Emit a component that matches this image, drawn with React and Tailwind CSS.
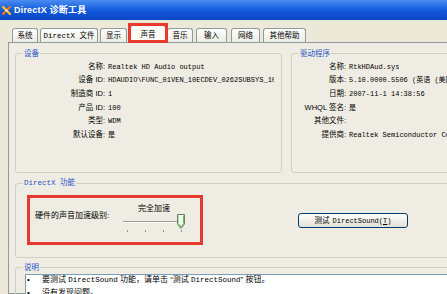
import React from "react";

const tabs = [
  { t: "系统", cls: "w-[26px] ml-[12px]" },
  { t: "DirectX 文件", cls: "w-[58px] ml-[2px]" },
  { t: "显示", cls: "w-[27px] ml-[2px]" },
  { t: "声音", cls: "w-[36px] ml-[3px]", sel: true },
  { t: "音乐", cls: "w-[26px] ml-[1px]" },
  { t: "输入", cls: "w-[31px] ml-[3px]" },
  { t: "网络", cls: "w-[29px] ml-[4px]" },
  { t: "其他帮助", cls: "w-[43px] ml-[3px]" },
];

const deviceRows = [
  ["名称:", "Realtek HD Audio output"],
  ["设备 ID:", "HDAUDIO\\FUNC_01VEN_10ECDEV_0262SUBSYS_10EC0888"],
  ["制造商 ID:", "1"],
  ["产品 ID:", "100"],
  ["类型:", "WDM"],
  ["默认设备:", "是"],
];

const driverRows = [
  ["名称:", "RtkHDAud.sys"],
  ["版本:", "5.10.0000.5506 (英语 (美国))"],
  ["日期:", "2007-11-1 14:38:56"],
  ["WHQL 签名:", "是"],
  ["其他文件:", ""],
  ["提供商:", "Realtek Semiconductor Corp."],
];

function GroupLabel({ children }) {
  return (
    <span className="absolute -top-[6px] left-[7px] px-[1px] bg-[#efede3] text-[#1d52c9] text-[7.5px] leading-[11px] whitespace-nowrap">
      {children}
    </span>
  );
}

function InfoRow({ label, value, labelW }) {
  return (
    <div className="flex items-center h-[13.6px] whitespace-nowrap">
      <span className={`${labelW} shrink-0 text-right text-[7.5px] leading-[10px]`}>{label}</span>
      <span className="ml-[3px] text-[7px] leading-[10px] font-['Liberation_Mono','Noto_Sans_CJK_SC',monospace] overflow-hidden">
        {value}
      </span>
    </div>
  );
}

function DxIcon() {
  return (
    <svg width="9" height="9" viewBox="0 0 9 9">
      <path d="M1 1 L8 8" stroke="#f7c21a" strokeWidth="2.4" strokeLinecap="round" />
      <path d="M8 1 L1 8" stroke="#e8731a" strokeWidth="2.4" strokeLinecap="round" />
      <circle cx="4.5" cy="4.5" r="1.3" fill="#fff6c0" />
    </svg>
  );
}

function Thumb() {
  return (
    <svg width="8" height="15" viewBox="0 0 8 15">
      <path d="M0.5 0.5 H7.5 V10 L4 14.5 L0.5 10 Z" fill="#f6f6f0" stroke="#6f7f6a" strokeWidth="1" />
      <path d="M1.5 9.8 L4 13 L6.5 9.8" fill="none" stroke="#3fbf3f" strokeWidth="1" />
      <path d="M6.5 1.5 V9.5" stroke="#4fc44f" strokeWidth="1" />
      <path d="M1.5 1.5 V9.5" stroke="#9fe09f" strokeWidth="1" />
    </svg>
  );
}

export default function App() {
  return (
    <div className="relative w-[447px] h-[294px] overflow-hidden bg-[#ece9d8] text-black font-['Liberation_Sans','Noto_Sans_CJK_SC',sans-serif]">
      {/* Title bar */}
      <div className="h-[20px] flex items-center bg-linear-to-b from-[#4a8cf0] via-[#1359de] to-[#0a47c2]">
        <div className="ml-[2px]">
          <DxIcon />
        </div>
        <span className="ml-[3px] text-white font-bold text-[9px] leading-[12px] tracking-[0.2px]">
          DirectX 诊断工具
        </span>
      </div>

      {/* Tabs */}
      <div className="flex items-end h-[22px]">
        {tabs.map((tab) =>
          tab.sel ? (
            <div
              key={tab.t}
              className={`${tab.cls} relative z-10 -mb-px h-[18px] border border-b-0 border-[#919b9c] rounded-t-[3px] bg-[#fbfaf6] flex items-center justify-center text-[7.5px] leading-[10px] whitespace-nowrap`}
            >
              {tab.t}
            </div>
          ) : (
            <div
              key={tab.t}
              className={`${tab.cls} h-[14px] border border-b-0 border-[#919b9c] rounded-t-[3px] bg-linear-to-b from-white to-[#ecebe3] flex items-center justify-center text-[7.5px] leading-[10px] whitespace-nowrap font-['Liberation_Mono','Noto_Sans_CJK_SC',monospace]`}
            >
              {tab.t}
            </div>
          )
        )}
      </div>

      {/* Tab panel */}
      <div className="ml-[8px] w-[470px] h-[252px] border border-[#919b9c] bg-[#efede3]">
        {/* Device / driver */}
        <div className="flex mt-[10px] ml-[6px] gap-[9px]">
          <div className="relative w-[267px] h-[120px] shrink-0 border border-[#d0d0bf] rounded-[3px] pt-[6px] pr-[7px]">
            <GroupLabel>设备</GroupLabel>
            {deviceRows.map(([l, v]) => (
              <InfoRow key={l} label={l} value={v} labelW="w-[89px]" />
            ))}
          </div>
          <div className="relative w-[200px] h-[120px] shrink-0 border border-[#d0d0bf] rounded-[3px] pt-[6px]">
            <GroupLabel>驱动程序</GroupLabel>
            {driverRows.map(([l, v]) => (
              <InfoRow key={l} label={l} value={v} labelW="w-[54px]" />
            ))}
          </div>
        </div>

        {/* DirectX features */}
        <div className="relative mt-[10px] ml-[6px] w-[460px] h-[75px] border border-[#d0d0bf] rounded-[3px] pt-[11px] pl-[11px] flex items-start">
          <span className="absolute -top-[6px] left-[7px] px-[1px] bg-[#efede3] text-[#1d52c9] text-[7.5px] leading-[11px] whitespace-nowrap font-['Liberation_Mono','Noto_Sans_CJK_SC',monospace]">
            DirectX 功能
          </span>
          <div className="w-[176px] h-[50px] shrink-0 border-[3px] border-[#e8392f] flex items-start">
            <div className="w-[91px] shrink-0 pl-[5px] pt-[11.5px] text-[8px] leading-[11px] whitespace-nowrap">
              硬件的声音加速级别:
            </div>
            <div className="w-[66px] shrink-0 flex flex-col">
              <div className="pt-[4.5px] text-center text-[8px] leading-[11px] whitespace-nowrap">完全加速</div>
              <div className="relative h-[16px] mt-[0.5px]">
                <div className="absolute left-[2px] top-[7px] w-[60px] h-[2px] border-t border-[#9d9a8e] border-b border-b-white" />
                <div className="absolute left-[56px] top-0">
                  <Thumb />
                </div>
              </div>
              <div className="flex ml-[6px] gap-[17px]">
                <div className="w-[1px] h-[2px] bg-[#9a9a9a]" />
                <div className="w-[1px] h-[2px] bg-[#9a9a9a]" />
                <div className="w-[1px] h-[2px] bg-[#9a9a9a]" />
                <div className="w-[1px] h-[2px] bg-[#9a9a9a]" />
              </div>
            </div>
          </div>
          <div className="ml-[95px] mt-[18px] w-[110px] h-[15px] shrink-0 rounded-[3px] border border-[#003c74] bg-linear-to-b from-white to-[#e2e0d5] flex items-center justify-center text-[7.5px] leading-[10px] whitespace-nowrap">
            <span>测试</span>
            <span className="ml-[3px] text-[7px] font-['Liberation_Mono',monospace]">
              DirectSound(<span className="underline">T</span>)
            </span>
          </div>
        </div>

        {/* Description */}
        <div className="relative mt-[9px] ml-[6px] w-[460px] h-[40px] border border-[#d0d0bf] rounded-[3px] pt-[6px] pl-[9px]">
          <GroupLabel>说明</GroupLabel>
          <div className="h-[40px] bg-white border border-[#7f9db9] pl-[1px] text-[8px]">
            <div className="flex items-center h-[10px] leading-[10px] whitespace-nowrap">
              <span className="w-[15px] shrink-0">•</span>
              <p className="whitespace-pre">
                要测试 <span className="text-[7.5px] font-['Liberation_Mono',monospace]">DirectSound</span> 功能，请单击 “测试 <span className="text-[7.5px] font-['Liberation_Mono',monospace]">DirectSound</span>” 按钮。
              </p>
            </div>
            <div className="flex items-center h-[10px] mt-[3px] leading-[10px] whitespace-nowrap">
              <span className="w-[15px] shrink-0">•</span>
              <span>没有发现问题。</span>
            </div>
          </div>
        </div>
      </div>

      {/* Red annotation around the selected tab */}
      <div className="absolute left-[128px] top-[23px] w-[40px] h-[20px] border-[3px] border-[#e8392f] z-20 pointer-events-none" />
    </div>
  );
}
